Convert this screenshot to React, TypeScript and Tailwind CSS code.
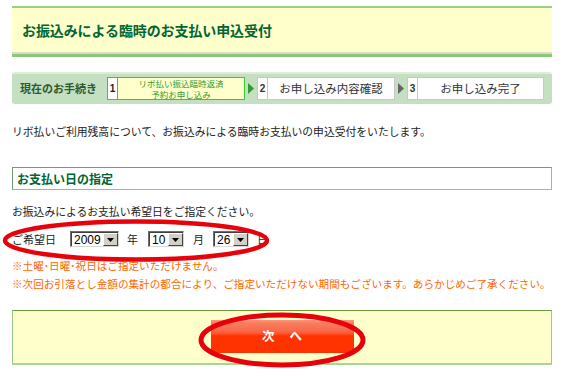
import React from "react";

const JP = { fontFamily: '"Noto Sans CJK JP", "Noto Sans", sans-serif' };
const LAT = { fontFamily: '"Liberation Sans", Arial, sans-serif' };

function Select({ value, w }: { value: string; w: string }) {
  return (
    <div
      className={`flex h-[16px] ${w} border border-t-[#6e6e6e] border-l-[#6e6e6e] border-b-[#d8d8d8] border-r-[#d8d8d8] bg-white`}
    >
      <div
        className="flex flex-1 items-center pl-[2px] text-[12px] leading-none text-black border-t border-l border-[#404040]"
        style={LAT}
      >
        {value}
      </div>
      <div className="flex w-[15px] items-center justify-center border-t border-[#404040] bg-[#d4d0c8] border-l-white">
        <div className="flex h-full w-full items-center justify-center border border-t-white border-l-white border-b-[#404040] border-r-[#404040]">
          <svg width="7" height="4" viewBox="0 0 7 4">
            <path d="M0 0 H7 L3.5 4 Z" fill="#000" />
          </svg>
        </div>
      </div>
    </div>
  );
}

function Arrow({ color }: { color: string }) {
  return (
    <div className="flex w-[12px] items-center justify-center">
      <svg width="6" height="11" viewBox="0 0 6 11">
        <path d="M0 0 L6 5.5 L0 11 Z" fill={color} />
      </svg>
    </div>
  );
}

export default function App() {
  return (
    <div className="relative h-[376px] w-[567px] overflow-hidden bg-white pl-[12px] pr-[15px] pt-[6px] text-[#222]" style={JP}>
      {/* Header */}
      <div className="border-t-2 border-b-[3px] border-t-[#9acf84] border-b-[#8cc77a]">
        <div className="flex h-[46px] items-center border-b-2 border-[#dcdcc6] bg-[#ffffcc] pl-[10px]">
          <span className="text-[14px] font-bold tracking-[-0.1px] text-[#006633]">
            お振込みによる臨時のお支払い申込受付
          </span>
        </div>
      </div>

      {/* Step bar */}
      <div className="mt-[15px] flex h-[32px] items-center rounded-[3px] bg-[linear-gradient(#dcefd6_0,#dcefd6_2px,#c4dfc1_2px)] pt-[1px]">
        <div className="w-[95px] pl-[8px] text-[11px] font-bold text-[#2f5a2f]">現在のお手続き</div>
        <div className="flex h-[23px] w-[138px] border border-[#33cc33]">
          <div className="flex w-[10px] items-center justify-center border-r border-[#33cc33] bg-white text-[10px] font-bold text-[#222]" style={LAT}>1</div>
          <div className="flex flex-1 flex-col items-center justify-center bg-[#ffffcc] text-[8.5px] leading-[10.5px] text-[#339933]">
            <span>リボ払い振込臨時返済</span>
            <span>予約お申し込み</span>
          </div>
        </div>
        <Arrow color="#339933" />
        <div className="flex h-[23px] w-[138px] border border-[#c8c8c8] bg-white">
          <div className="flex w-[10px] items-center justify-center border-r border-[#c8c8c8] text-[10px] font-bold text-[#333]" style={LAT}>2</div>
          <div className="flex flex-1 items-center justify-center text-[11.5px] text-[#333]">お申し込み内容確認</div>
        </div>
        <Arrow color="#666666" />
        <div className="flex h-[23px] w-[137px] border border-[#c8c8c8] bg-white">
          <div className="flex w-[10px] items-center justify-center border-r border-[#c8c8c8] text-[10px] font-bold text-[#333]" style={LAT}>3</div>
          <div className="flex flex-1 items-center justify-center text-[11.5px] text-[#333]">お申し込み完了</div>
        </div>
      </div>

      {/* Intro */}
      <p className="mt-[20px] text-[10.8px] leading-[14px]">
        リボ払いご利用残高について、お振込みによる臨時お支払いの申込受付をいたします。
      </p>

      {/* Section */}
      <div className="mt-[29px] flex h-[23px] items-center border border-t-[#6f9f6f] border-l-[#6f9f6f] border-b-[#7fd06f] border-r-[#7fd06f] pl-[4px]">
        <span className="text-[12px] font-bold text-[#006633]">お支払い日の指定</span>
      </div>

      <p className="mt-[14px] text-[10.8px] leading-[14px]">お振込みによるお支払い希望日をご指定ください。</p>

      {/* Date row */}
      <div className="mt-[13px] flex h-[16px] items-center text-[11px]">
        <span className="w-[58px]">ご希望日</span>
        <Select value="2009" w="w-[49px]" />
        <span className="ml-[8px]">年</span>
        <div className="ml-[10px]">
          <Select value="10" w="w-[36px]" />
        </div>
        <span className="ml-[9px]">月</span>
        <div className="ml-[9px]">
          <Select value="26" w="w-[36px]" />
        </div>
        <span className="ml-[8px]">日</span>
      </div>

      {/* Notes */}
      <div className="mt-[10px] text-[10.6px] leading-[18px] text-[#ff6600]">
        <p>※土曜･日曜･祝日はご指定いただけません。</p>
        <p className="whitespace-nowrap">※次回お引落とし金額の集計の都合により、ご指定いただけない期間もございます。あらかじめご了承ください。</p>
      </div>

      {/* Bottom box */}
      <div className="mt-[17px] flex h-[55px] justify-center border border-t-[#6b9a3a] border-l-[#99cc88] border-r-[#99cc88] border-b-2 border-b-[#a6d69c] bg-[#ffffcc] pt-[9px]">
        <div className="flex h-[33px] w-[143px] items-center justify-center gap-[15px] bg-[linear-gradient(#fb977b_0,#fa7d5e_3px,#f8694a_11px,#ff5a30_13px,#ff3300_16px,#ff3300_100%)] text-[12.5px] font-bold text-white">
          <span>次</span>
          <span>へ</span>
        </div>
      </div>

      {/* Red annotation ellipses */}
      <svg className="pointer-events-none absolute left-0 top-0" width="567" height="376" viewBox="0 0 567 376">
        <ellipse cx="136" cy="240.5" rx="131" ry="19" fill="none" stroke="#e8000b" strokeWidth="4.5" />
        <ellipse cx="282" cy="340" rx="81" ry="25" fill="none" stroke="#e8000b" strokeWidth="5" />
      </svg>
    </div>
  );
}
